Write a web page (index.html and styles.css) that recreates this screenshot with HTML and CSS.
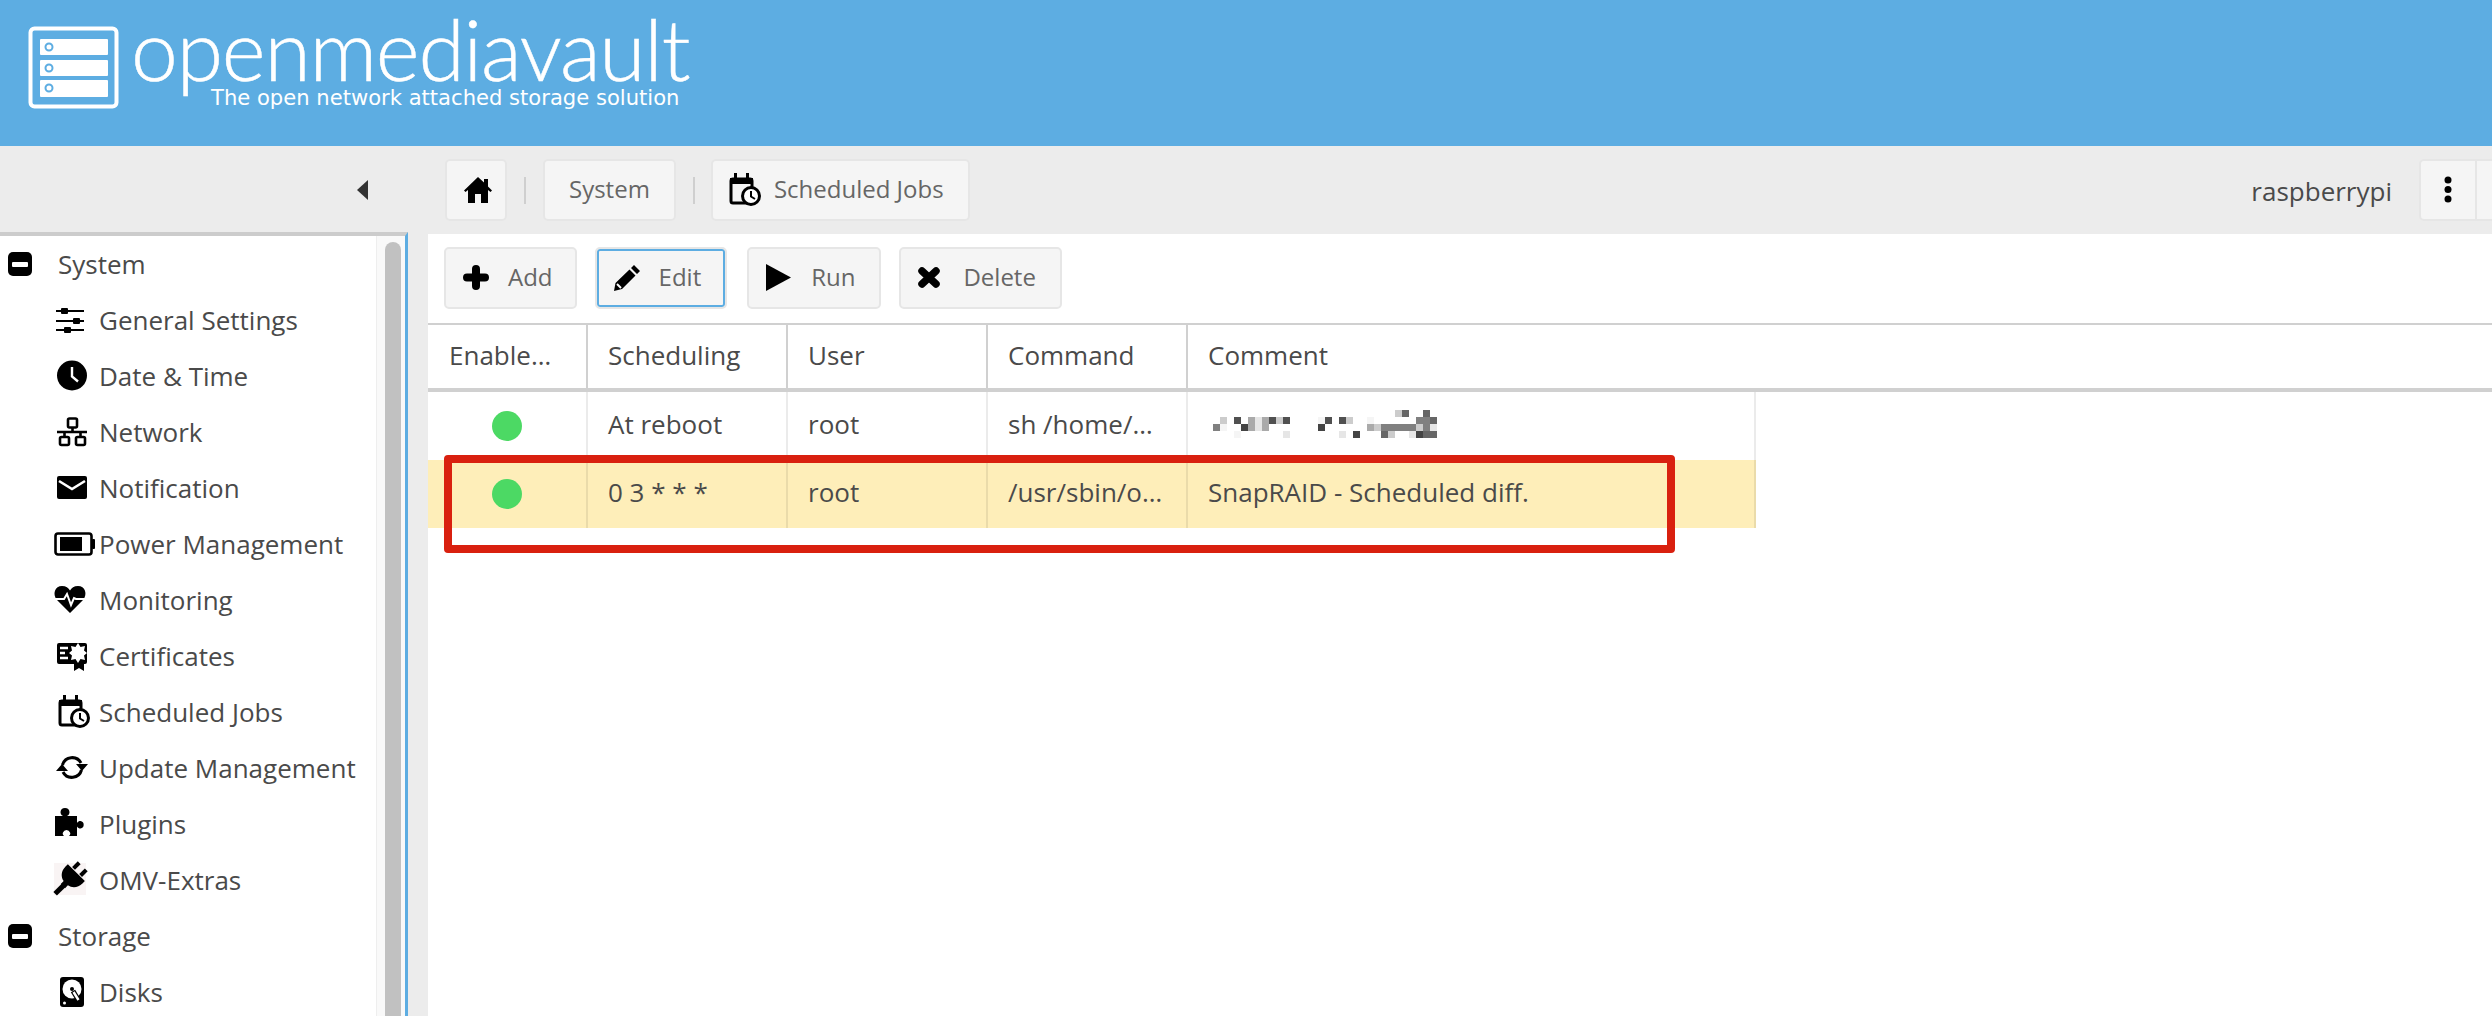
FILE: index.html
```html
<!DOCTYPE html>
<html lang="en">
<head>
  <meta charset="UTF-8">
  <meta name="viewport" content="width=device-width, initial-scale=1.0">
  <title>openmediavault</title>
  <link rel="stylesheet" href="styles.css">
</head>
<body>
  <svg class="sprite" aria-hidden="true">
    <symbol id="icon-minus" viewBox="0 0 24 24">
      <rect width="24" height="24" rx="5" fill="#000"/>
      <rect x="4" y="10" width="16" height="5" rx="1" fill="#fff"/>
    </symbol>
    <symbol id="icon-scheduled" viewBox="0 0 40 32" overflow="visible">
      <rect x="6" y="5" width="21" height="24" rx="2" fill="none" stroke="#000" stroke-width="3"/>
      <rect x="5" y="4" width="23" height="6" fill="#000"/>
      <rect x="9" y="-1" width="3" height="6" fill="#000"/>
      <rect x="21" y="-1" width="3" height="6" fill="#000"/>
      <circle cx="26" cy="22" r="8.5" fill="#fff" stroke="#000" stroke-width="3"/>
      <path d="M26 17v5.5l4 2.5" fill="none" stroke="#000" stroke-width="2"/>
    </symbol>
  </svg>

  <header class="top">
    <svg class="logo" viewBox="0 0 91 83">
      <rect x="2.5" y="2.5" width="86" height="78" rx="4" fill="none" stroke="#fff" stroke-width="4"/>
      <rect x="12" y="13" width="68" height="16" rx="1" fill="#fff"/>
      <rect x="12" y="34" width="68" height="16" rx="1" fill="#fff"/>
      <rect x="12" y="54" width="68" height="17" rx="1" fill="#fff"/>
      <circle cx="21" cy="21" r="3.5" fill="none" stroke="#5dade2" stroke-width="2"/>
      <circle cx="21" cy="42" r="3.5" fill="none" stroke="#5dade2" stroke-width="2"/>
      <circle cx="21" cy="62" r="3.5" fill="none" stroke="#5dade2" stroke-width="2"/>
    </svg>
    <div class="brand">
      <div class="brand-name">openmediavault</div>
      <div class="brand-tag">The open network attached storage solution</div>
    </div>
  </header>

  <div class="content">
    <aside class="left">
      <div class="left-bar"><span class="collapse"></span></div>
      <div class="nav">
        <ul class="tree">
          <li class="tree-group"><svg class="minus"><use href="#icon-minus"/></svg>System</li>
          <li class="tree-item">
            <svg class="ico" viewBox="0 0 40 32"><path d="M2 7h28M2 17h28M2 26h28" stroke="#000" stroke-width="2"/><rect x="7" y="4" width="7" height="6" rx="1"/><rect x="19" y="14" width="7" height="6" rx="1"/><rect x="10" y="23" width="7" height="6" rx="1"/></svg>
            General Settings
          </li>
          <li class="tree-item">
            <svg class="ico" viewBox="0 0 40 32"><circle cx="18" cy="15.5" r="15"/><path d="M18 7v9.5l6 5" fill="none" stroke="#fff" stroke-width="2.4"/></svg>
            Date &amp; Time
          </li>
          <li class="tree-item">
            <svg class="ico" viewBox="0 0 40 32"><g fill="none" stroke="#000" stroke-width="2.6"><rect x="14" y="2.5" width="9" height="9" rx="1.5"/><rect x="6" y="21" width="9" height="8" rx="1.5"/><rect x="22" y="21" width="9" height="8" rx="1.5"/><path d="M18.5 11v5M3 16h30M10.5 16v5M26.5 16v5"/></g></svg>
            Network
          </li>
          <li class="tree-item">
            <svg class="ico" viewBox="0 0 40 32"><rect x="3" y="4" width="30" height="23" rx="2"/><path d="M5 9l13 8 13-8" fill="none" stroke="#fff" stroke-width="2.6"/></svg>
            Notification
          </li>
          <li class="tree-item">
            <svg class="ico" viewBox="0 0 40 32"><rect x="1.5" y="5.5" width="36" height="21" rx="2.5" fill="none" stroke="#000" stroke-width="2.6"/><rect x="6" y="9" width="22" height="14"/><rect x="38" y="11" width="3" height="10" rx="1"/></svg>
            Power Management
          </li>
          <li class="tree-item">
            <svg class="ico" viewBox="0 0 40 32"><path d="M16 29L3 16C-2 10 1 2 8 2c4 0 6.500 2 8 4.500C17.500 4 20 2 24 2c7 0 10 8 5 14z"/><path d="M1 15h9l3-5 4 11 3-7 2 1h9" fill="none" stroke="#fff" stroke-width="2"/></svg>
            Monitoring
          </li>
          <li class="tree-item">
            <svg class="ico" viewBox="0 0 40 32"><path d="M5 3h26a2 2 0 0 1 2 2v17a2 2 0 0 1-2 2h-1v7l-5-3-5 3v-7H5a2 2 0 0 1-2-2V5a2 2 0 0 1 2-2z"/><path d="M6 8h8M6 13h5M6 18h8" stroke="#fff" stroke-width="2.4"/><path d="M24 3l2.500 4 4.500-1-1 4.500 3 2.500-3 2.500 1 4.500-4.500-1-2.500 4-2.500-4-4.500 1 1-4.500-3-2.500 3-2.500-1-4.500 4.500 1z" fill="#fff"/></svg>
            Certificates
          </li>
          <li class="tree-item"><svg class="ico"><use href="#icon-scheduled"/></svg>Scheduled Jobs</li>
          <li class="tree-item">
            <svg class="ico" viewBox="0 0 40 32"><g fill="none" stroke="#000" stroke-width="3"><path d="M8.500 13A10 10 0 0 1 27 11"/><path d="M27.500 18A10 10 0 0 1 9 20"/></g><path d="M22 12h12l-6 7zM2 19h12L8 12z"/></svg>
            Update Management
          </li>
          <li class="tree-item">
            <svg class="ico" viewBox="0 0 40 32"><path d="M1 8h8c-2-1-2.500-2.500-2.500-4A4.500 4.500 0 0 1 11 0a4.500 4.500 0 0 1 4.500 4c0 1.500-.5 3-2.500 4h10v7c1-1.500 2-2 3.500-2a3.800 3.800 0 0 1 0 7.500c-1.500 0-2.500-.5-3.500-2v9.500h-8c1.500-1.500 1.500-2.500 1-3.500a3.700 3.700 0 0 0-7 0c-.5 1-.5 2 1 3.500H1z"/></svg>
            Plugins
          </li>
          <li class="tree-item">
            <svg class="ico plug" viewBox="0 0 40 32"><rect x="0" y="-1" width="32" height="32" fill="#f9f4f4"/><g transform="rotate(45 16 15)"><rect x="9" y="-3" width="4" height="8"/><rect x="19" y="-3" width="4" height="8"/><path d="M4 6h24v3c0 7-4 11-9 12v4h-6v-4C8 20 4 16 4 9z"/><rect x="13.500" y="24" width="5" height="12"/></g></svg>
            OMV-Extras
          </li>
          <li class="tree-group"><svg class="minus"><use href="#icon-minus"/></svg>Storage</li>
          <li class="tree-item">
            <svg class="ico" viewBox="0 0 40 32"><rect x="6" y="1" width="24" height="30" rx="3"/><circle cx="18" cy="13" r="9.500" fill="#fff"/><circle cx="18" cy="13" r="2"/><path d="M19 15l6 10" stroke="#000" stroke-width="5"/><path d="M19.500 16l5 8" stroke="#fff" stroke-width="2.500"/><circle cx="10.500" cy="27" r="1.500" fill="#fff"/></svg>
            Disks
          </li>
        </ul>
        <div class="scroll"><div class="scroll-thumb"></div></div>
      </div>
    </aside>

    <main class="right">
      <nav class="crumbs">
        <a class="crumb crumb-home">
          <svg class="crumb-ico" viewBox="0 0 28 26"><path d="M14 0l6 5.500V2h4v7.500l4 4-1.500 1.500-2.500-2v13h-7v-9h-6v9H4V13l-2.500 2L0 13.500z"/></svg>
        </a>
        <span class="crumb-sep"></span>
        <a class="crumb">System</a>
        <span class="crumb-sep"></span>
        <a class="crumb crumb-jobs"><svg class="crumb-cal"><use href="#icon-scheduled"/></svg>Scheduled Jobs</a>
        <span class="hostname">raspberrypi</span>
        <div class="host-btns">
          <button class="host-btn">
            <svg width="8" height="28" viewBox="0 0 8 28"><circle cx="4" cy="4" r="3.500"/><circle cx="4" cy="13.500" r="3.500"/><circle cx="4" cy="23" r="3.500"/></svg>
          </button>
          <button class="host-btn host-btn-cut"></button>
        </div>
      </nav>

      <section class="panel">
        <div class="actions">
          <button class="btn btn-add"><span class="btn-ico"><svg width="26" height="25" viewBox="0 0 26 25"><path d="M13 4v17M4 12.500h18" stroke="#000" stroke-width="8" stroke-linecap="round"/></svg></span>Add</button>
          <button class="btn btn-focus"><span class="btn-ico"><svg width="27" height="27" viewBox="0 0 27 27"><path d="M20 1l6 6-3 3-6-6zM15.500 5.500l6 6L8 25l-8 2 1.500-8z"/><path d="M3 20l4 4" stroke="#fff" stroke-width="2"/></svg></span>Edit</button>
          <button class="btn"><span class="btn-ico"><svg width="25" height="27" viewBox="0 0 25 27"><path d="M0 0l25 13.500L0 27z"/></svg></span>Run</button>
          <button class="btn btn-delete"><span class="btn-ico"><svg width="22" height="21" viewBox="0 0 22 21"><path d="M4 4l14 13M18 4L4 17" stroke="#000" stroke-width="7.500" stroke-linecap="round"/></svg></span>Delete</button>
        </div>

        <div class="grid-head">
          <div class="cell col-enabled">Enable…</div>
          <div class="cell col">Scheduling</div>
          <div class="cell col">User</div>
          <div class="cell col">Command</div>
          <div class="cell col-comment">Comment</div>
        </div>

        <div class="grid-row">
          <div class="cell col-enabled"><span class="dot"></span></div>
          <div class="cell col">At reboot</div>
          <div class="cell col">root</div>
          <div class="cell col">sh /home/…</div>
          <div class="cell col-comment">
            <svg class="blur" viewBox="0 0 32 4" shape-rendering="crispEdges">
              <g fill="#666"><rect x="27" y="0" width="1" height="1"/><rect x="30" y="0" width="1" height="1"/><rect x="31" y="1" width="1" height="1"/><rect x="24" y="3" width="1" height="1"/><rect x="30" y="3" width="2" height="1"/></g>
              <g fill="#ccc"><rect x="26" y="0" width="1" height="1"/><rect x="1" y="1" width="1" height="1"/><rect x="9" y="1" width="1" height="1"/><rect x="19" y="1" width="1" height="1"/><rect x="23" y="2" width="1" height="1"/><rect x="29" y="2" width="1" height="1"/><rect x="25" y="3" width="1" height="1"/></g>
              <g fill="#505050"><rect x="3" y="1" width="1" height="1"/><rect x="8" y="1" width="1" height="1"/><rect x="10" y="1" width="1" height="1"/><rect x="16" y="1" width="1" height="1"/><rect x="18" y="1" width="1" height="1"/></g>
              <g fill="#444"><rect x="4" y="2" width="1" height="1"/><rect x="15" y="2" width="1" height="1"/><rect x="20" y="3" width="1" height="1"/><rect x="29" y="3" width="1" height="1"/></g>
              <g fill="#aaa"><rect x="5" y="1" width="1" height="1"/><rect x="7" y="1" width="1" height="1"/><rect x="5" y="2" width="1" height="1"/><rect x="7" y="2" width="1" height="1"/><rect x="22" y="2" width="1" height="1"/></g>
              <g fill="#e6e6e6"><rect x="6" y="1" width="1" height="1"/><rect x="6" y="2" width="1" height="1"/><rect x="10" y="3" width="1" height="1"/><rect x="18" y="3" width="1" height="1"/><rect x="28" y="3" width="1" height="1"/><rect x="31" y="2" width="1" height="1"/></g>
              <g fill="#808080"><rect x="29" y="1" width="2" height="1"/><rect x="0" y="2" width="1" height="1"/><rect x="24" y="2" width="5" height="1"/><rect x="30" y="2" width="1" height="1"/></g>
              <g fill="#f5f5f5"><rect x="15" y="1" width="1" height="1"/><rect x="22" y="1" width="1" height="1"/><rect x="1" y="2" width="1" height="1"/><rect x="3" y="3" width="1" height="1"/></g>
            </svg>
          </div>
        </div>

        <div class="grid-row grid-row-selected">
          <div class="cell col-enabled"><span class="dot"></span></div>
          <div class="cell col">0 3 * * *</div>
          <div class="cell col">root</div>
          <div class="cell col">/usr/sbin/o…</div>
          <div class="cell col-comment">SnapRAID - Scheduled diff.</div>
        </div>

        <div class="marker"></div>
      </section>
    </main>
  </div>
</body>
</html>
```

FILE: styles.css
```css
* {
  box-sizing: border-box;
  margin: 0;
  padding: 0;
}

html, body {
  height: 100%;
  overflow: hidden;
}

body {
  font-family: "Open Sans", sans-serif;
  font-size: 26px;
  color: #4a4a4a;
  background-color: #ececec;
}

.sprite {
  display: none;
}

/* header */
.top {
  height: 146px;
  display: flex;
  padding: 26px 0 0 28px;
  background-color: #5dade2;
  color: #fff;
}

.logo {
  width: 91px;
  height: 83px;
  flex-shrink: 0;
}

.brand {
  margin-left: 12px;
}

.brand-name {
  font-family: Lato, sans-serif;
  font-weight: 300;
  font-size: 84px;
  line-height: 60px;
  letter-spacing: -1.2px;
  margin-top: -7px;
  -webkit-text-stroke: 0.5px #fff;
}

.brand-tag {
  font-family: "DejaVu Sans", sans-serif;
  font-size: 21.1px;
  line-height: 24px;
  margin: 7px 0 0 80px;
  white-space: nowrap;
}

/* main area */
.content {
  display: flex;
  height: 870px;
}

.left {
  width: 428px;
  flex-shrink: 0;
  display: flex;
  flex-direction: column;
}

.left-bar {
  height: 86px;
  display: flex;
  align-items: center;
  padding: 0 0 0 357px;
}

.collapse {
  width: 0;
  height: 0;
  margin-top: 1px;
  border-style: solid;
  border-width: 10px 11px 10px 0;
  border-color: transparent #333 transparent transparent;
}

.nav {
  flex: 1;
  width: 408px;
  display: flex;
  overflow: hidden;
  border-top: 4px solid #cccccc;
  border-right: 3px solid #5dade2;
}

.tree {
  width: 376px;
  flex-shrink: 0;
  list-style-type: none;
  background-color: #fff;
}

.tree-group,
.tree-item {
  height: 56px;
  display: flex;
  align-items: center;
  white-space: nowrap;
}

.tree-group {
  padding-left: 8px;
}

.tree-item {
  padding-left: 54px;
}

.minus {
  width: 24px;
  height: 24px;
  margin-right: 26px;
}

.ico {
  width: 40px;
  height: 32px;
  margin-right: 5px;
  overflow: visible;
  flex-shrink: 0;
}

.scroll {
  flex: 1;
  padding: 6px 4px 0 8px;
  background-color: #f9f9f9;
  border-left: 1px solid #eeeeee;
}

.scroll-thumb {
  height: 900px;
  border-radius: 8px;
  background-color: #c1c1c1;
}

.right {
  flex: 1;
  min-width: 0;
  display: flex;
  flex-direction: column;
}

/* breadcrumbs */
.crumbs {
  height: 88px;
  flex-shrink: 0;
  display: flex;
  align-items: center;
  padding-left: 17px;
}

.crumb {
  height: 62px;
  display: flex;
  align-items: center;
  padding: 0 24px 4px;
  font-size: 24px;
  color: #666;
  background-color: #f5f5f5;
  border: 2px solid #e6e6e6;
  border-radius: 5px;
}

.crumb-home {
  width: 62px;
  padding: 0 0 0 17px;
}

.crumb-ico {
  width: 28px;
  height: 26px;
}

.crumb-sep {
  width: 2px;
  height: 27px;
  margin: 0 17px;
  background-color: #cfcfcf;
}

.crumb-jobs {
  margin-left: -1px;
  padding-left: 12px;
}

.crumb-cal {
  width: 40px;
  height: 32px;
  margin: 4px 9px 0 0;
  overflow: visible;
}

.hostname {
  margin: 0 27px 0 auto;
  padding-top: 1px;
}

.host-btns {
  display: flex;
}

.host-btn {
  width: 57px;
  height: 62px;
  display: flex;
  align-items: center;
  justify-content: center;
  background-color: #f5f5f5;
  border: 2px solid #e6e6e6;
  border-right-width: 1px;
  border-radius: 5px 0 0 5px;
}

.host-btn-cut {
  width: 16px;
  border-width: 2px 0 2px 1px;
  border-radius: 0;
}

/* grid panel */
.panel {
  flex: 1;
  position: relative;
  background-color: #fff;
}

.actions {
  height: 89px;
  display: flex;
  align-items: flex-start;
  gap: 20px;
  padding: 13px 0 0 16px;
}

.btn {
  height: 62px;
  display: flex;
  align-items: center;
  padding: 0 24px 4px 17px;
  font-family: inherit;
  font-size: 24px;
  color: #666;
  background-color: #f5f5f5;
  border: 2px solid #e6e6e6;
  border-radius: 5px;
}

.btn-add {
  padding-right: 22px;
}

.btn-delete {
  margin-left: -2px;
}

.btn-focus {
  margin-left: -2px;
  box-shadow: inset 0 0 0 2px #5dade2;
}

.btn-ico {
  width: 27px;
  margin: 3px 18px 0 0;
  display: flex;
  align-items: center;
}

.grid-head {
  height: 69px;
  display: flex;
  border-top: 2px solid #d0d0d0;
  border-bottom: 4px solid #d0d0d0;
}

.grid-head .cell {
  border-right: 2px solid #d0d0d0;
}

.grid-head .col-comment {
  border-right: 0;
}

.grid-row {
  width: 1328px;
  height: 68px;
  display: flex;
}

.grid-row-selected {
  background-color: #feeeb9;
}

.grid-row .cell {
  padding-bottom: 5px;
  border-right: 2px solid rgba(0, 0, 0, 0.08);
}

.cell {
  display: flex;
  align-items: center;
  padding: 0 0 3px 20px;
  white-space: nowrap;
  overflow: hidden;
}

.col-enabled {
  width: 160px;
  justify-content: center;
  padding-left: 0;
}

.grid-head .col-enabled {
  justify-content: flex-start;
  padding-left: 21px;
}

.col {
  width: 200px;
}

.col-comment {
  width: 568px;
}

.dot {
  width: 30px;
  height: 30px;
  margin-top: 5px;
  border-radius: 50%;
  background-color: #4cd964;
}

.blur {
  width: 224px;
  height: 28px;
  margin: 1px 0 0 5px;
}

/* red annotation round the second row */
.marker {
  position: absolute;
  left: 16px;
  top: 221px;
  width: 1231px;
  height: 98px;
  border: 8px solid #d9200f;
  border-radius: 4px;
}
```
